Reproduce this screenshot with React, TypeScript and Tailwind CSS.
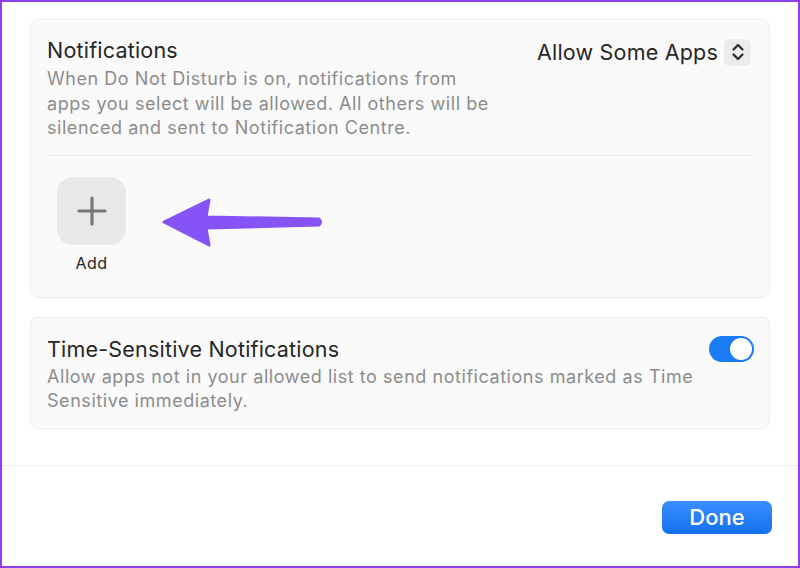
import React from "react";

const font = { fontFamily: "Inter, 'Liberation Sans', sans-serif" };

const App = () => {
  return (
    <div
      className="w-[800px] h-[568px] border-2 border-[#8e3ff0] bg-white flex flex-col overflow-hidden"
      style={font}
    >
      <div className="flex flex-col gap-[19px] px-[28px] pt-[17px]">
        {/* notifications card */}
        <div className="relative border border-[#ececec] bg-[#fafafa] rounded-lg px-4 pt-[15px] pb-[24px]">
          <div className="flex justify-between items-start">
            <div className="flex flex-col">
              <p className="text-[21.5px] leading-[30px] tracking-[0.2px] text-[#262626]">Notifications</p>
              <p className="text-[18px] leading-[24.5px] tracking-[0.55px] text-[#8c8c8c] whitespace-nowrap mt-[2px]">
                When Do Not Disturb is on, notifications from
                <br />
                apps you select will be allowed. All others will be
                <br />
                silenced and sent to Notification Centre.
              </p>
            </div>
            <div className="flex items-center gap-[6px] pt-[2px] pr-[2px]">
              <span className="text-[21.5px] leading-[30px] tracking-[0.2px] text-[#262626]">Allow Some Apps</span>
              <span className="w-[27px] h-[27px] rounded-[6px] bg-[#ececec] flex items-center justify-center">
                <svg width="14" height="20" viewBox="0 0 14 20" fill="none" stroke="#2a2a2a" strokeWidth="2.2" strokeLinecap="round" strokeLinejoin="round">
                  <path d="M2.5 7.5 L7 3 L11.5 7.5" />
                  <path d="M2.5 12.5 L7 17 L11.5 12.5" />
                </svg>
              </span>
            </div>
          </div>
          <div className="h-px bg-[#ebebeb] mt-[14px]" />
          <div className="flex flex-col items-center w-[69px] ml-[10px] mt-[21px]">
            <div className="w-[69px] h-[68px] rounded-[16px] bg-[#e8e8e8] flex items-center justify-center">
              <svg width="30" height="30" viewBox="0 0 30 30" stroke="#777" strokeWidth="3.2" strokeLinecap="round">
                <path d="M15 2 V28" />
                <path d="M2 15 H28" />
              </svg>
            </div>
            <span className="text-[16px] leading-[20px] tracking-[0.5px] text-[#262626] mt-[8px]">Add</span>
          </div>
          {/* annotation arrow */}
          <svg
            className="absolute left-[131px] top-[178px]"
            width="162"
            height="50"
            viewBox="0 0 162 50"
          >
            <path
              d="M2 24 L47 2 L44 19 L157 21 Q160 24 157 27 L44 30 L47 47 Z"
              fill="#8553f6"
              stroke="#8553f6"
              strokeWidth="3"
              strokeLinejoin="round"
            />
          </svg>
        </div>

        {/* time sensitive card */}
        <div className="border border-[#ececec] bg-[#fafafa] rounded-lg px-4 pt-[16px] pb-[14px]">
          <div className="flex justify-between items-start">
            <p className="text-[21.5px] leading-[30px] tracking-[0.2px] text-[#262626]">Time-Sensitive Notifications</p>
            <div className="w-[45px] h-[26px] rounded-full bg-[#1a7cf5] flex items-center justify-end px-[2px] mt-[2px] mr-[-1px]">
              <div className="w-[22px] h-[22px] rounded-full bg-white" />
            </div>
          </div>
          <p className="text-[18px] leading-[24.5px] tracking-[0.55px] text-[#8c8c8c] whitespace-nowrap mt-[1px]">
            Allow apps not in your allowed list to send notifications marked as Time
            <br />
            Sensitive immediately.
          </p>
        </div>
      </div>

      <div className="h-px bg-[#ececec] mt-[36px]" />

      <div className="flex justify-end pr-[26px] pt-[35px]">
        <button className="w-[110px] h-[33px] rounded-[7px] bg-gradient-to-b from-[#3a8fff] to-[#0f70f0] text-white text-[22px] leading-[28px] font-medium">
          Done
        </button>
      </div>
    </div>
  );
};

export default App;
